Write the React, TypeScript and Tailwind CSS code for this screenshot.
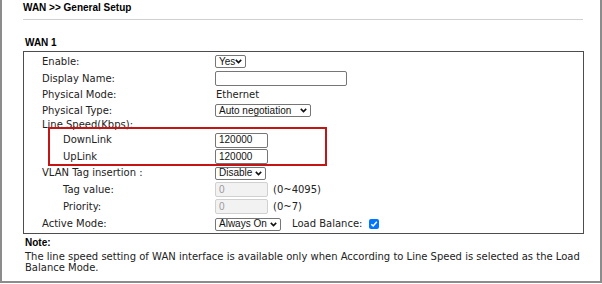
import type { ReactNode } from 'react'

const LABEL_FONT = "font-['DejaVu_Sans',Verdana,sans-serif]"
const CTRL_FONT = "font-['Liberation_Sans',Arial,sans-serif]"

function Chevron() {
  return (
    <svg width="7" height="5" viewBox="0 0 7 5" className="shrink-0">
      <path d="M0.8 0.9 L3.5 3.6 L6.2 0.9" fill="none" stroke="#111" strokeWidth="1.6" />
    </svg>
  )
}

function Select({ value, width }: { value: string; width: string }) {
  return (
    <div
      className={`${width} ${CTRL_FONT} h-[13px] inline-flex items-center justify-between border border-[#767676] rounded-[2px] pl-[3px] pr-[3px] text-[10px] leading-none text-[#111] bg-white`}
    >
      <span>{value}</span>
      <Chevron />
    </div>
  )
}

function TextBox({ value = '', width, disabled = false }: { value?: string; width: string; disabled?: boolean }) {
  return (
    <div
      className={`${width} ${CTRL_FONT} h-[15px] flex items-center border rounded-[2px] pl-[3px] text-[10px] leading-none ${
        disabled ? 'bg-[#f2f2f2] border-[#d0d0d0] text-[#9a9a9a]' : 'bg-white border-[#767676] text-[#111]'
      }`}
    >
      {value}
    </div>
  )
}

function Row({ label, h, indent = false, children }: { label: string; h: string; indent?: boolean; children?: ReactNode }) {
  return (
    <div className={`flex items-center ${h}`}>
      <div className={`w-[191px] shrink-0 ${indent ? 'pl-[39px]' : 'pl-[18px]'}`}>{label}</div>
      <div className="flex items-center">{children}</div>
    </div>
  )
}

export default function App() {
  return (
    <div className="w-[602px] h-[284px] bg-white overflow-hidden">
      <div className={`w-[602px] h-[283px] border-x-2 border-b-2 border-[#8c8c8c] pl-[21px] ${LABEL_FONT} text-[10px] text-[#222]`}>
        {/* page title */}
        <div className="w-[560px] h-[20px] border-b-[1.5px] border-[#cfcfcf]">
          <div className={`${CTRL_FONT} font-bold text-[10px] leading-[16px] text-black`}>WAN &gt;&gt; General Setup</div>
        </div>

        <div className={`${CTRL_FONT} font-bold text-[10px] leading-[12px] text-black pl-[2px] mt-[17px] mb-[2px]`}>WAN 1</div>

        {/* settings table */}
        <div className="relative w-[561px] border border-[#4d4d4d] pt-[1px] leading-[12px]">
          <Row label="Enable:" h="h-[17px]">
            <Select value="Yes" width="w-[31px]" />
          </Row>
          <Row label="Display Name:" h="h-[17px]">
            <TextBox width="w-[132px]" />
          </Row>
          <Row label="Physical Mode:" h="h-[16px]">
            <span className="pl-[1px]">Ethernet</span>
          </Row>
          <Row label="Physical Type:" h="h-[15px]">
            <Select value="Auto negotiation" width="w-[96px]" />
          </Row>
          <Row label="Line Speed(Kbps):" h="h-[14px]" />
          <Row label="DownLink" h="h-[16px]" indent>
            <TextBox value="120000" width="w-[53px]" />
          </Row>
          <Row label="UpLink" h="h-[17px]" indent>
            <TextBox value="120000" width="w-[53px]" />
          </Row>
          <Row label="VLAN Tag insertion :" h="h-[16px]">
            <Select value="Disable" width="w-[51px]" />
          </Row>
          <Row label="Tag value:" h="h-[17px]" indent>
            <TextBox value="0" width="w-[53px]" disabled />
            <span className="ml-[5px]">(0~4095)</span>
          </Row>
          <Row label="Priority:" h="h-[17px]" indent>
            <TextBox value="0" width="w-[53px]" disabled />
            <span className="ml-[5px]">(0~7)</span>
          </Row>
          <Row label="Active Mode:" h="h-[18px]">
            <Select value="Always On" width="w-[66px]" />
            <span className="ml-[11px]">Load Balance:</span>
            <span className="ml-[7px] w-[10px] h-[10px] rounded-[2px] bg-[#0075ff] flex items-center justify-center">
              <svg width="8" height="8" viewBox="0 0 8 8">
                <path d="M1.3 4.2 L3.2 6 L6.8 1.8" fill="none" stroke="#fff" strokeWidth="1.5" />
              </svg>
            </span>
          </Row>

          {/* red highlight around the line speed inputs */}
          <div className="absolute left-[24px] top-[75px] w-[279px] h-[39px] border-2 border-[#c41515]" />
        </div>

        {/* note */}
        <div className="pl-[2px] mt-[3px]">
          <div className={`${CTRL_FONT} font-bold text-black leading-[12px]`}>Note:</div>
          <p className="w-[558px] mt-[2px] leading-[11px]">
            The line speed setting of WAN interface is available only when According to Line Speed is selected as the Load Balance Mode.
          </p>
        </div>
      </div>
    </div>
  )
}
